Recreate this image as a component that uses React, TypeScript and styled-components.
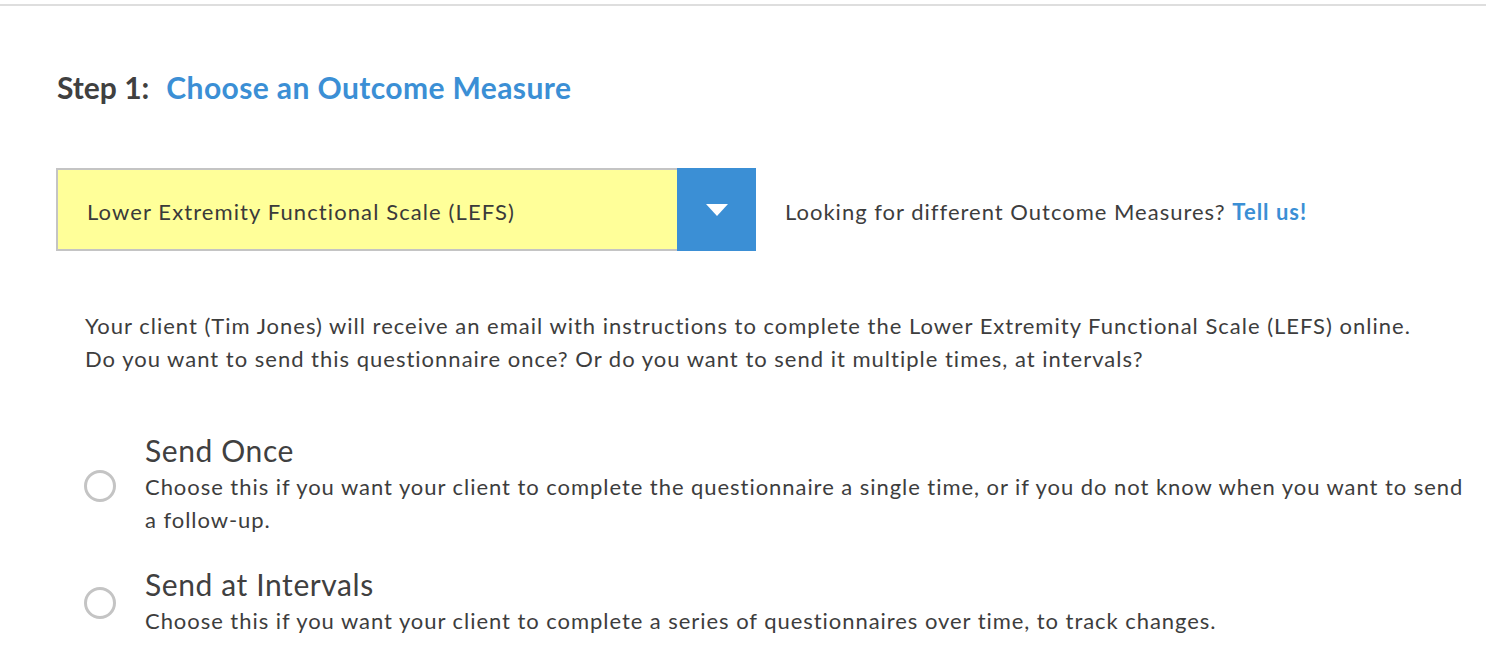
import React from "react";
import styled, { createGlobalStyle } from "styled-components";

const Global = createGlobalStyle`
  html, body { margin: 0; padding: 0; background: #fff; }
  body { font-family: Lato, "Open Sans", sans-serif; color: #3d3d3d; }
`;

const Page = styled.div`
  border-top: 2px solid #dedede;
  margin-top: 4px;
  padding: 64px 0 0 56px;
`;

const Heading = styled.h2`
  margin: 0;
  font-size: 30px;
  font-weight: 700;
  line-height: 34px;
  color: #404040;
  display: flex;
  gap: 17px;
  padding-left: 1px;
`;

const Blue = styled.span`
  color: #3b8fd5;
  letter-spacing: 0.4px;
`;

const SelectRow = styled.div`
  display: flex;
  align-items: center;
  margin-top: 64px;
  gap: 29px;
`;

const Select = styled.div`
  display: flex;
  width: 700px;
  height: 83px;
  box-sizing: border-box;
  border: 2px solid #c4c4c4;
  border-right: none;
  background: #ffff99;
`;

const SelectText = styled.div`
  flex: 1;
  display: flex;
  align-items: center;
  padding: 3px 0 0 29px;
  font-size: 22px;
  letter-spacing: 1.1px;
  color: #3a3a3a;
`;

const SelectButton = styled.div`
  width: 79px;
  margin: -2px 0;
  background: #3b8fd5;
  display: flex;
  align-items: center;
  justify-content: center;
`;

const Side = styled.div`
  font-size: 22px;
  letter-spacing: 1px;
  color: #3d3d3d;
  padding-top: 3px;
`;

const Link = styled.a`
  color: #3b8fd5;
  font-weight: 700;
  text-decoration: none;
`;

const Para = styled.p`
  margin: 58px 0 0 29px;
  font-size: 22px;
  letter-spacing: 1px;
  line-height: 33px;
  color: #3d3d3d;
`;

const Options = styled.div`
  margin: 55px 0 0 28px;
  padding-right: 14px;
  display: flex;
  flex-direction: column;
  gap: 28px;
`;

const Option = styled.label`
  display: flex;
  align-items: center;
  gap: 29px;
`;

const Radio = styled.span`
  width: 32px;
  height: 32px;
  margin-top: 5px;
  box-sizing: border-box;
  border: 3px solid #c4c4c4;
  border-radius: 50%;
  flex-shrink: 0;
`;

const OptionBody = styled.div`
  display: flex;
  flex-direction: column;
`;

const OptionTitle = styled.div`
  font-size: 30px;
  letter-spacing: 0.6px;
  line-height: 40px;
  color: #404040;
`;

const OptionDesc = styled.div`
  font-size: 22px;
  letter-spacing: 0.95px;
  line-height: 33px;
  color: #3d3d3d;
`;

export default function App() {
  return (
    <>
      <Global />
      <Page>
        <Heading>
          <span>Step 1:</span>
          <Blue>Choose an Outcome Measure</Blue>
        </Heading>
        <SelectRow>
          <Select>
            <SelectText>Lower Extremity Functional Scale (LEFS)</SelectText>
            <SelectButton>
              <svg width="22" height="12" viewBox="0 0 22 12">
                <path d="M0 0 H22 L11 12 Z" fill="#fff" />
              </svg>
            </SelectButton>
          </Select>
          <Side>
            Looking for different Outcome Measures? <Link href="#">Tell us!</Link>
          </Side>
        </SelectRow>
        <Para>
          Your client (Tim Jones) will receive an email with instructions to complete the Lower Extremity Functional Scale (LEFS) online.
          <br />
          Do you want to send this questionnaire once? Or do you want to send it multiple times, at intervals?
        </Para>
        <Options>
          <Option>
            <Radio />
            <OptionBody>
              <OptionTitle>Send Once</OptionTitle>
              <OptionDesc>
                Choose this if you want your client to complete the questionnaire a single time, or if you do not know when you want to send a follow-up.
              </OptionDesc>
            </OptionBody>
          </Option>
          <Option>
            <Radio />
            <OptionBody>
              <OptionTitle>Send at Intervals</OptionTitle>
              <OptionDesc>
                Choose this if you want your client to complete a series of questionnaires over time, to track changes.
              </OptionDesc>
            </OptionBody>
          </Option>
        </Options>
      </Page>
    </>
  );
}
